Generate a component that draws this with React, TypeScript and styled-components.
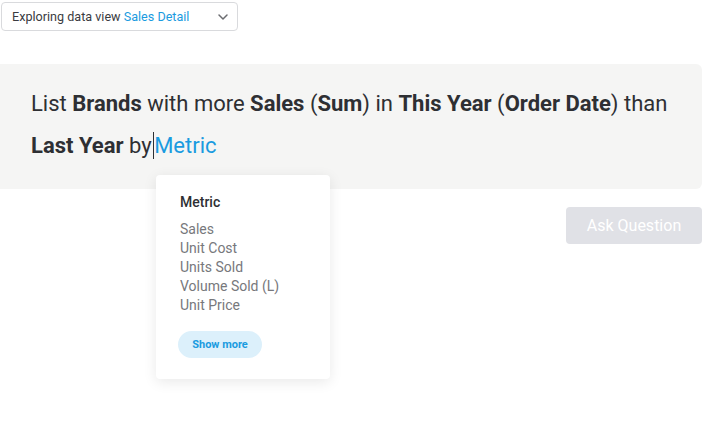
import React from "react";
import styled, { createGlobalStyle } from "styled-components";

const Global = createGlobalStyle`
  html, body { margin: 0; padding: 0; background: #ffffff; }
  body { font-family: Roboto, "Noto Sans", Arial, sans-serif; color: #2e2f33; }
  * { box-sizing: border-box; }
`;

const Page = styled.div`
  width: 702px;
  height: 428px;
  padding-top: 2px;
  display: flex;
  flex-direction: column;
  overflow: hidden;
`;

const ViewSelect = styled.div`
  margin-left: 1px;
  width: 237px;
  height: 29px;
  border: 1px solid #d9dadd;
  border-radius: 4px;
  display: flex;
  align-items: center;
  padding: 0 7px 0 10px;
  font-size: 12.6px;
  color: #3a3b3f;
  background: #fff;
`;

const ViewLabel = styled.span`
  flex: 1;
  white-space: nowrap;
`;

const ViewName = styled.span`
  color: #1a9be0;
`;

const Chevron = styled.svg`
  width: 14px;
  height: 14px;
  flex: none;
`;

const QueryWrap = styled.div`
  position: relative;
  margin-top: 33px;
`;

const QueryPanel = styled.div`
  height: 125px;
  background: #f5f5f4;
  border-radius: 0 6px 6px 0;
  padding: 19px 20px 0 31px;
  font-size: 22px;
  line-height: 42px;
  color: #2e2f33;
  white-space: nowrap;
`;

const Strong = styled.b`
  font-weight: 700;
`;

const Caret = styled.span`
  display: inline-block;
  width: 1.5px;
  height: 27px;
  background: #2e2f33;
  vertical-align: -6px;
  margin-left: 1px;
`;

const Placeholder = styled.span`
  color: #1a9be0;
`;

const Popup = styled.div`
  position: absolute;
  left: 156px;
  top: 111px;
  width: 174px;
  height: 204px;
  background: #fff;
  border-radius: 4px;
  box-shadow: 0 3px 14px rgba(0, 0, 0, 0.09);
  padding: 18px 0 0 24px;
  display: flex;
  flex-direction: column;
  align-items: flex-start;
  z-index: 2;
`;

const PopupTitle = styled.div`
  font-size: 14px;
  font-weight: 500;
  color: #2e2f33;
  line-height: 18px;
  margin-bottom: 9px;
`;

const OptionList = styled.div`
  display: flex;
  flex-direction: column;
`;

const Option = styled.div`
  font-size: 14px;
  line-height: 19px;
  color: #77787c;
`;

const ShowMore = styled.button`
  margin-top: 16px;
  margin-left: -2px;
  width: 84px;
  height: 27px;
  border: none;
  border-radius: 14px;
  background: #dcf0fb;
  color: #1a9be0;
  font-family: Roboto, Arial, sans-serif;
  font-size: 11px;
  font-weight: 700;
  padding: 0;
`;

const Actions = styled.div`
  display: flex;
  justify-content: flex-end;
  margin-top: 18px;
`;

const AskButton = styled.button`
  width: 136px;
  height: 37px;
  border: none;
  border-radius: 4px;
  background: #e0e1e6;
  color: #ffffff;
  font-family: Roboto, Arial, sans-serif;
  font-size: 16px;
  padding: 0;
`;

const options = ["Sales", "Unit Cost", "Units Sold", "Volume Sold (L)", "Unit Price"];

export default function App() {
  return (
    <>
      <Global />
      <Page>
        <ViewSelect>
          <ViewLabel>
            Exploring data view <ViewName>Sales Detail</ViewName>
          </ViewLabel>
          <Chevron viewBox="0 0 14 14" fill="none">
            <path d="M3 5l4 4 4-4" stroke="#6b6c70" strokeWidth="1.5" strokeLinecap="round" strokeLinejoin="round" />
          </Chevron>
        </ViewSelect>
        <QueryWrap>
          <QueryPanel>
            List <Strong>Brands</Strong> with more <Strong>Sales</Strong> (<Strong>Sum</Strong>) in{" "}
            <Strong>This Year</Strong> (<Strong>Order Date</Strong>) than
            <br />
            <Strong>Last Year</Strong> by
            <Caret />
            <Placeholder>Metric</Placeholder>
          </QueryPanel>
          <Popup>
            <PopupTitle>Metric</PopupTitle>
            <OptionList>
              {options.map((o) => (
                <Option key={o}>{o}</Option>
              ))}
            </OptionList>
            <ShowMore>Show more</ShowMore>
          </Popup>
        </QueryWrap>
        <Actions>
          <AskButton>Ask Question</AskButton>
        </Actions>
      </Page>
    </>
  );
}
